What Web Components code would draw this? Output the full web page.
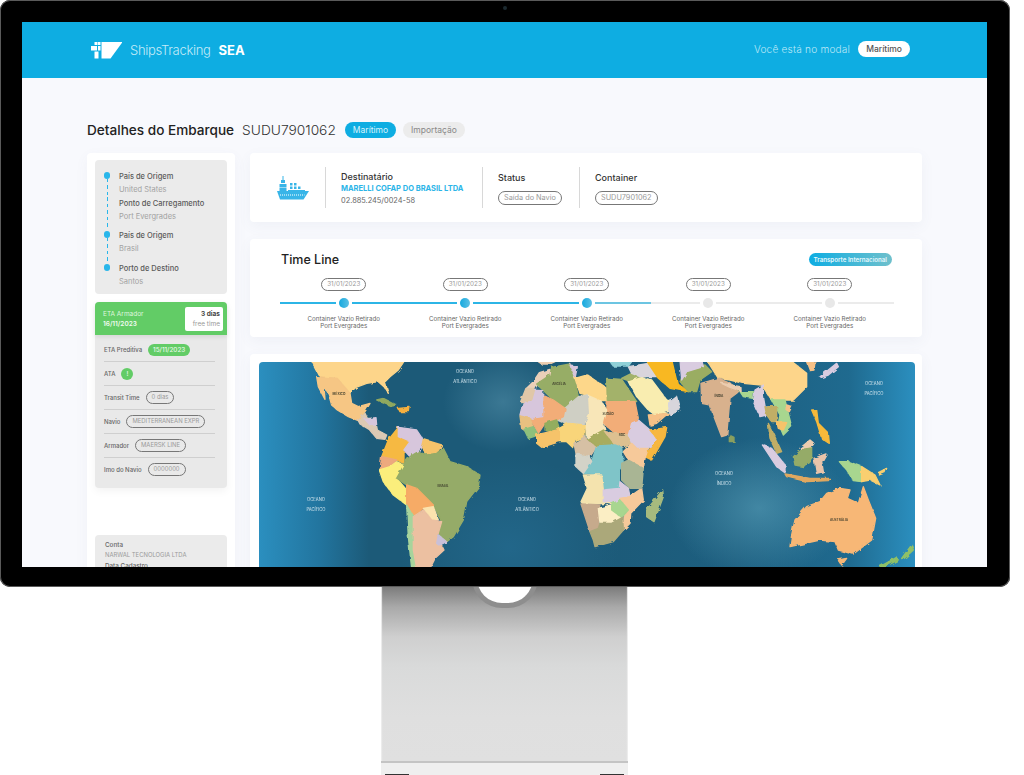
<!DOCTYPE html>
<html lang="pt-BR">
<head>
<meta charset="utf-8">
<title>ShipsTracking SEA</title>
<style>
    html, body { margin: 0; padding: 0; background: #fff; height: 775px; overflow: hidden; }
    body { font-family: Inter, "Liberation Sans", sans-serif; }
</style>
</head>
<body>
<desktop-monitor>
    <app-header></app-header>
    <shipment-page></shipment-page>
</desktop-monitor>

<script>
/*
*   Monitor frame: black bezel with the page inside, and the aluminium stand below.
*/
class DesktopMonitor extends HTMLElement {
    constructor() {
        super();
        this.attachShadow({ mode: "open" });
        this.shadowRoot.innerHTML = `
            <style>
                :host { display: block; width: 1010px; }
                .bezel {
                    background: #000;
                    border-radius: 10px;
                    box-shadow: inset 0 0 0 1px #5a5a5a;
                    padding: 22px 23px 20px 22px;
                    position: relative;
                    z-index: 1;
                }
                .camera {
                    position: absolute; top: 6px; left: 503px;
                    width: 4px; height: 4px; border-radius: 50%;
                    background: #1c2a30;
                }
                .screen {
                    height: 545px;
                    overflow: hidden;
                    background: #f8f9fd;
                    filter: blur(.35px);
                }
                .stand {
                    position: relative;
                    margin-left: 381px;
                    width: 247px;
                    height: 188px;
                    display: flex;
                    flex-direction: column;
                    justify-content: flex-end;
                    background: linear-gradient(180deg, #7c7c7c 0, #a9a9a9 20px, #cfcfcf 50px, #d9dada 80px, #dfdfdf 130px, #e0e0e0 174px);
                    box-shadow: inset 2px 0 1px -1px #eee, inset -2px 0 1px -1px #eee;
                }
                .notch {
                    position: absolute; left: 91px; top: -14px;
                    width: 56px; height: 30px;
                    border-radius: 0 0 30px 30px;
                    background: #fff;
                    border: 5px solid #8e8e8e;
                    border-top: 0;
                    box-sizing: content-box;
                }
                .base {
                    height: 12px;
                    background: #efefef;
                    border-top: 2px solid #c4c4c4;
                    display: flex;
                    justify-content: space-between;
                    align-items: flex-end;
                    padding: 0 4px;
                }
                .foot { width: 24px; height: 1px; background: #333; }
            </style>
            <div class="bezel">
                <div class="camera"></div>
                <div class="screen"><slot></slot></div>
            </div>
            <div class="stand">
                <div class="notch"></div>
                <div class="base"><span class="foot"></span><span class="foot"></span></div>
            </div>
        `;
    }
}
customElements.define("desktop-monitor", DesktopMonitor);

class AppHeader extends HTMLElement {
    constructor() {
        super();
        this.attachShadow({ mode: "open" });
        this.shadowRoot.innerHTML = `
            <style>
                :host {
                    display: flex;
                    align-items: center;
                    justify-content: space-between;
                    height: 56px;
                    padding: 0 77px 0 69px;
                    background: #0eade2;
                }
                .brand { display: flex; align-items: center; }
                .brand svg { display: block; margin-right: 8px; }
                .name { font-size: 13px; font-weight: 300; color: #c4ebf8; letter-spacing: -0.3px; }
                .sea { font-size: 13px; font-weight: 700; color: #fff; margin-left: 8px; }
                .modal { display: flex; align-items: center; gap: 8px; margin-top: -2px; }
                .modal span { font-size: 10.1px; font-weight: 300; color: #bde8f7; letter-spacing: .2px; }
                .modal b {
                    display: block;
                    background: #fff; color: #555;
                    font-size: 8.5px; font-weight: 500;
                    line-height: 16px; padding: 0 8px;
                    border-radius: 8px;
                }
            </style>
            <div class="brand">
                <svg width="31" height="18" viewBox="91 42 31 18" fill="#fff">
                    <rect x="94.5" y="43" width="3" height="3"/>
                    <rect x="98" y="43" width="2.5" height="3"/>
                    <rect x="91" y="47" width="6" height="4.5"/>
                    <rect x="98" y="47" width="2.5" height="4.5"/>
                    <rect x="94.5" y="52.5" width="4" height="7"/>
                    <path d="M101.5 43 H122.5 L110.5 59.5 H101.5 Z"/>
                </svg>
                <span class="name">ShipsTracking</span>
                <span class="sea">SEA</span>
            </div>
            <div class="modal"><span>Você está no modal</span><b>Marítimo</b></div>
        `;
    }
}
customElements.define("app-header", AppHeader);

/*
*   Small outlined pill used for values all over the page.
*/
class ValuePill extends HTMLElement {
    constructor() {
        super();
        this.attachShadow({ mode: "open" });
        this.shadowRoot.innerHTML = `
            <style>
                :host {
                    display: inline-block;
                    border: 1px solid #777;
                    border-radius: 8px;
                    padding: 0 5px;
                    font-size: 5.9px;
                    font-weight: 400;
                    line-height: 10.5px;
                    color: #999;
                    white-space: nowrap;
                }
            </style>
            <slot></slot>
        `;
    }
}
customElements.define("value-pill", ValuePill);

class RouteStop extends HTMLElement {
    constructor() {
        super();
        this.attachShadow({ mode: "open" });
        this.shadowRoot.innerHTML = `
            <style>
                :host { display: flex; }
                .rail { width: 24px; display: flex; flex-direction: column; align-items: center; flex: none; }
                .dot { width: 6.5px; height: 6.5px; border-radius: 50%; background: #29b6ea; margin-top: 2px; flex: none; }
                .dash {
                    flex: 1; width: 1px;
                    background: repeating-linear-gradient(180deg, #29b6ea 0, #29b6ea 3.5px, transparent 3.5px, transparent 6.5px);
                }
                :host([plain]) .dot { display: none; }
                :host([last]) .dash { display: none; }
                .label { font-size: 7.5px; font-weight: 500; color: #5a5a5a; line-height: 13px; }
                .value { font-size: 7.5px; color: #a2a2a2; line-height: 13px; }
            </style>
            <div class="rail"><span class="dot"></span><span class="dash"></span></div>
            <div>
                <div class="label">${this.getAttribute("label")}</div>
                <div class="value">${this.getAttribute("value")}</div>
            </div>
        `;
    }
}
customElements.define("route-stop", RouteStop);

class InfoRow extends HTMLElement {
    constructor() {
        super();
        this.attachShadow({ mode: "open" });
        this.shadowRoot.innerHTML = `
            <style>
                :host {
                    display: flex;
                    align-items: center;
                    gap: 6px;
                    height: 23px;
                    border-bottom: 1px solid #cfcfcf;
                    font-size: 6px;
                    font-weight: 500;
                    color: #666;
                }
                :host([last]) { border-bottom: 0; }
            </style>
            <span>${this.getAttribute("label")}</span>
            <slot></slot>
        `;
    }
}
customElements.define("info-row", InfoRow);

class ShipmentSidebar extends HTMLElement {
    constructor() {
        super();
        this.attachShadow({ mode: "open" });
        this.shadowRoot.innerHTML = `
            <style>
                :host {
                    display: block;
                    width: 148px;
                    height: 470px;
                    box-sizing: border-box;
                    padding: 7px 8px 0 8px;
                    background: #fff;
                    border-radius: 4px;
                    box-shadow: 0 4px 14px rgba(90,100,130,.05);
                }
                .route {
                    background: #ebebeb;
                    border-radius: 4px;
                    height: 134px;
                    box-sizing: border-box;
                    padding: 10px 0 0 0;
                }
                route-stop:nth-child(1) { height: 27px; }
                route-stop:nth-child(2) { height: 32px; }
                route-stop:nth-child(3) { height: 33px; }
                .eta { margin-top: 8px; background: #e9e9e9; border-radius: 4px; height: 186px; box-shadow: 0 3px 8px rgba(0,0,0,.05); }
                .eta-head {
                    height: 33px;
                    box-sizing: border-box;
                    background: #62cc66;
                    border-radius: 4px 4px 0 0;
                    padding: 4px 4px 4px 8px;
                    display: flex;
                    justify-content: space-between;
                    align-items: center;
                    box-shadow: 0 2px 4px rgba(0,0,0,.08);
                    font-size: 6.5px;
                    line-height: 10px;
                    color: #dff6df;
                }
                .eta-head b { display: block; font-weight: 600; color: #f2fbf2; }
                .free {
                    width: 38px; height: 24px;
                    box-sizing: border-box;
                    background: #fff;
                    border-radius: 2px;
                    padding: 2px 3px;
                    text-align: right;
                    color: #999;
                    line-height: 10px;
                }
                .free b { color: #444; font-weight: 700; }
                .rows { padding: 3px 12px 0 9px; }
                .green {
                    background: #62cc66; color: #e9f9e9;
                    border-radius: 6px;
                    font-size: 6.3px; font-weight: 500;
                    line-height: 12px; padding: 0 5px;
                }
                .ata { padding: 0; width: 12px; text-align: center; }
                .account {
                    margin-top: 47px;
                    background: #ebebeb;
                    border-radius: 4px;
                    padding: 6px 10px;
                    font-size: 5.9px;
                    line-height: 9px;
                    color: #9a9a9a;
                    height: 60px;
                }
                .account b { display: block; font-weight: 500; color: #666; margin-top: 3px; font-size: 6.3px; }
                .account b:first-child { margin-top: 0; }
            </style>
            <div class="route">
                <route-stop label="País de Origem" value="United States"></route-stop>
                <route-stop plain label="Ponto de Carregamento" value="Port Evergrades"></route-stop>
                <route-stop label="País de Origem" value="Brasil"></route-stop>
                <route-stop last label="Porto de Destino" value="Santos"></route-stop>
            </div>
            <div class="eta">
                <div class="eta-head">
                    <div>ETA Armador<b>16/11/2023</b></div>
                    <div class="free"><b>3 dias</b>free time</div>
                </div>
                <div class="rows">
                    <info-row label="ETA Preditiva"><span class="green">15/11/2023</span></info-row>
                    <info-row label="ATA"><span class="green ata">!</span></info-row>
                    <info-row label="Transit Time"><value-pill>0 dias</value-pill></info-row>
                    <info-row label="Navio"><value-pill>MEDITERRANEAN EXPR</value-pill></info-row>
                    <info-row label="Armador"><value-pill>MAERSK LINE</value-pill></info-row>
                    <info-row last label="Imo do Navio"><value-pill>0000000</value-pill></info-row>
                </div>
            </div>
            <div class="account">
                <b>Conta</b>NARWAL TECNOLOGIA LTDA
                <b>Data Cadastro</b>
            </div>
        `;
    }
}
customElements.define("shipment-sidebar", ShipmentSidebar);

class SummaryCard extends HTMLElement {
    constructor() {
        super();
        this.attachShadow({ mode: "open" });
        this.shadowRoot.innerHTML = `
            <style>
                :host {
                    display: flex;
                    align-items: center;
                    height: 69px;
                    background: #fff;
                    border-radius: 4px;
                    box-shadow: 0 4px 14px rgba(90,100,130,.06);
                }
                .ship { width: 75px; display: flex; justify-content: center; padding-left: 10px; box-sizing: border-box; }
                .col {
                    height: 41px;
                    box-sizing: border-box;
                    border-left: 1px solid #d8d8d8;
                    padding-left: 15px;
                }
                .dest { width: 157px; padding-top: 3px; }
                .status { width: 97px; padding-top: 4px; }
                .title { font-size: 9px; font-weight: 500; color: #333; line-height: 13px; }
                .company { font-size: 7.5px; font-weight: 700; color: #2bb5e8; line-height: 11px; white-space: nowrap; }
                .doc { font-size: 7.4px; color: #666; line-height: 13px; }
                value-pill { font-size: 7.3px; line-height: 12px; margin-top: 1px; padding: 0 5px; }
            </style>
            <div class="ship">
                <svg width="32" height="24" viewBox="0 0 32 24" fill="#38b5e8">
                    <rect x="5.5" y="0" width="1" height="6"/>
                    <rect x="4" y="4" width="4" height="3"/>
                    <rect x="2.5" y="8" width="7" height="3"/>
                    <rect x="2.5" y="11.500" width="7" height="3.500"/>
                    <rect x="13" y="7" width="2.500" height="2.500"/><rect x="17" y="7" width="2.500" height="2.500"/>
                    <rect x="13" y="10.500" width="2.500" height="2.500"/><rect x="17" y="10.500" width="2.500" height="2.500"/><rect x="21" y="10.500" width="2.500" height="2.500"/>
                    <rect x="11" y="14" width="17" height="1.500"/>
                    <path d="M0 15 H32 L26.500 23.500 H3 Z"/>
                    <path d="M3 19 H27.500" stroke="#bfe9f8" stroke-width="1.500" stroke-dasharray="1 1"/>
                </svg>
            </div>
            <div class="col dest">
                <div class="title">Destinatário</div>
                <div class="company">MARELLI COFAP DO BRASIL LTDA</div>
                <div class="doc">02.885.245/0024-58</div>
            </div>
            <div class="col status">
                <div class="title">Status</div>
                <value-pill>Saída do Navio</value-pill>
            </div>
            <div class="col status">
                <div class="title">Container</div>
                <value-pill>SUDU7901062</value-pill>
            </div>
        `;
    }
}
customElements.define("summary-card", SummaryCard);

/*
*   One stop of the time line: date on top, dot on the rail, text below.
*   state: done | going | next | (empty)
*/
class TimelineStep extends HTMLElement {
    constructor() {
        super();
        const state = this.getAttribute("state") || "";
        this.attachShadow({ mode: "open" });
        this.shadowRoot.innerHTML = `
            <style>
                :host { display: flex; flex-direction: column; align-items: center; }
                .rail { width: 100%; display: flex; align-items: center; gap: 3px; margin: 7px 0; height: 10px; }
                .line { flex: 1; height: 2px; background: #ebebeb; }
                .dot { width: 10px; height: 10px; border-radius: 50%; background: #e8e8e8; flex: none; }
                .done .line, .going .line:first-child { background: #2cb5e6; }
                .going .line:last-child { background: #6cc5e2; }
                .next .line:first-child { background: linear-gradient(90deg, #6cc5e2 3px, #ebebeb 3px); }
                .done .dot, .going .dot { background: linear-gradient(90deg, #15a9df, #5cc0e4); }
                :host(:first-child) .line:first-child { box-shadow: -3px 0 0 #2cb5e6; }
                :host(:last-child) .line:last-child { box-shadow: 3px 0 0 #ebebeb; }
                .text { font-size: 6.2px; line-height: 7px; color: #666; text-align: center; white-space: nowrap; }
                value-pill { font-size: 6.3px; }
            </style>
            <value-pill>${this.getAttribute("date")}</value-pill>
            <div class="rail ${state}"><span class="line"></span><span class="dot"></span><span class="line"></span></div>
            <div class="text">Container Vazio Retirado<br>Port Evergrades</div>
        `;
    }
}
customElements.define("timeline-step", TimelineStep);

class TimelineCard extends HTMLElement {
    constructor() {
        super();
        this.attachShadow({ mode: "open" });
        this.shadowRoot.innerHTML = `
            <style>
                :host {
                    display: block;
                    height: 98px;
                    box-sizing: border-box;
                    padding: 14px 30px 0 33px;
                    background: #fff;
                    border-radius: 4px;
                    box-shadow: 0 4px 14px rgba(90,100,130,.06);
                }
                .head { display: flex; justify-content: space-between; align-items: center; height: 13px; }
                h2 { margin: 0 0 0 -2px; font-size: 12.5px; font-weight: 500; color: #222; }
                .badge {
                    background: linear-gradient(90deg, #0eade2, #6fc0cc);
                    color: #e6f8fd;
                    font-size: 6.2px; font-weight: 600;
                    line-height: 13px;
                    padding: 0 5px;
                    border-radius: 7px;
                    white-space: nowrap;
                }
                .steps { display: grid; grid-template-columns: repeat(5, 121.5px); margin-top: 12px; }
            </style>
            <div class="head"><h2>Time Line</h2><span class="badge">Transporte Internacional</span></div>
            <div class="steps">
                <timeline-step state="done" date="31/01/2023"></timeline-step>
                <timeline-step state="done" date="31/01/2023"></timeline-step>
                <timeline-step state="going" date="31/01/2023"></timeline-step>
                <timeline-step state="next" date="31/01/2023"></timeline-step>
                <timeline-step date="31/01/2023"></timeline-step>
            </div>
        `;
    }
}
customElements.define("timeline-card", TimelineCard);

/*
*   World map, hand traced. Coordinates are in 3x units of three regions of the map.
*/
const AMERICAS = [
    ["#fdd58a", "M183,30 L465,30 L445,60 L420,80 L405,95 L415,130 L402,110 L385,95 L350,100 L318,112 L300,128 L262,85 L210,80 Z"],
    ["#f6c684", "M200,80 L262,85 L300,130 L305,160 L325,170 L360,160 L345,185 L325,212 L295,200 L262,180 L245,165 L235,130 L222,110 L225,148 L205,110 Z"],
    ["#dcc9b4", "M325,212 L345,190 L352,205 L375,205 L382,240 L410,255 L405,268 L380,265 L360,240 L330,222 Z"],
    ["#d7c6dc", "M345,208 L378,203 L380,225 L360,225 Z"],
    ["#8fa85f", "M380,150 L400,145 L440,165 L425,168 L395,157 Z"],
    ["#f5b03f", "M445,175 L480,172 L478,185 L450,185 Z"],
    ["#f6b943", "M415,270 L445,232 L445,260 L480,275 L462,300 L462,340 L440,330 L395,320 Z"],
    ["#d7c6dc", "M445,232 L500,240 L520,270 L505,305 L480,320 L462,300 L480,275 L445,260 Z"],
    ["#f6c36b", "M520,268 L575,285 L560,310 L530,315 L515,290 Z"],
    ["#eda97e", "M395,320 L440,330 L420,350 L390,360 Z"],
    ["#fbee7c", "M388,360 L420,350 L440,335 L462,345 L440,385 L470,420 L470,465 L430,435 L400,395 Z"],
    ["#95ab67", "M480,320 L505,305 L530,315 L560,310 L580,295 L600,335 L650,350 L690,375 L685,410 L650,455 L640,510 L610,560 L590,575 L565,550 L575,515 L550,465 L500,415 L470,405 L440,385 L462,345 L462,340 Z"],
    ["#f6ab66", "M470,405 L500,415 L550,465 L550,490 L520,475 L490,500 L470,465 Z"],
    ["#fbe3ae", "M520,475 L550,470 L565,510 L545,510 Z"],
    ["#a7d49c", "M470,465 L490,500 L490,600 L500,655 L485,655 L475,560 Z"],
    ["#ecc0a1", "M490,500 L520,480 L545,510 L575,515 L562,560 L582,600 L555,625 L540,655 L500,655 L490,600 Z"],
    ["#c9c0d8", "M565,555 L590,575 L570,585 L560,580 Z"]
];

const AFRICA = [
    ["#eacfb8", "M118,38 L150,28 L155,45 L115,70 L105,85 L80,85 L100,65 Z"],
    ["#97ad66", "M110,72 L150,45 L155,22 L210,12 L225,60 L235,110 L195,145 L160,120 Z"],
    ["#d7c6dc", "M210,15 L232,20 L225,55 Z"],
    ["#fdd78a", "M225,55 L262,45 L320,85 L322,125 L305,125 L262,105 L240,100 Z"],
    ["#a3b26a", "M320,55 L365,58 L410,125 L322,122 Z"],
    ["#f2ad78", "M322,125 L405,125 L415,175 L395,195 L385,225 L345,220 L310,190 L320,150 Z"],
    ["#f8e6b8", "M262,105 L305,125 L320,150 L310,190 L315,210 L262,235 L255,190 L265,165 Z"],
    ["#cfcfc4", "M195,145 L235,110 L262,105 L265,165 L250,190 L195,190 L170,180 Z"],
    ["#f2ad78", "M128,105 L160,120 L195,145 L190,170 L170,180 L135,190 L115,220 L90,175 L128,170 Z"],
    ["#d7c6dc", "M85,90 L128,92 L128,170 L90,175 L60,165 L70,125 L95,125 Z"],
    ["#e0c7a8", "M62,125 L78,85 L105,85 L95,120 Z"],
    ["#e8c080", "M60,168 L90,175 L100,205 L80,215 L65,205 Z"],
    ["#8fc07c", "M72,208 L100,200 L115,225 L85,235 Z"],
    ["#93ad5e", "M135,190 L170,180 L178,205 L150,215 L135,210 Z"],
    ["#f9d57a", "M178,205 L205,190 L255,195 L255,230 L225,240 L218,262 L200,245 L180,245 Z"],
    ["#f6c36b", "M110,225 L150,215 L178,208 L178,245 L125,262 L110,250 Z"],
    ["#d6c0a4", "M222,250 L255,230 L262,240 L290,260 L270,290 L228,280 Z"],
    ["#a8ac5f", "M262,237 L310,210 L345,235 L345,255 L290,258 Z"],
    ["#ddc090", "M315,215 L345,220 L385,225 L395,250 L365,262 L345,255 Z"],
    ["#d9cce0", "M385,225 L395,190 L415,180 L450,210 L475,235 L445,265 L410,265 L395,250 Z"],
    ["#f7b73f", "M450,210 L500,203 L495,230 L455,300 L435,290 L470,235 Z"],
    ["#f6c99a", "M395,250 L410,265 L445,265 L435,295 L430,325 L385,300 L370,275 Z"],
    ["#7fc4c8", "M290,258 L345,255 L365,262 L370,310 L358,330 L358,385 L310,385 L305,345 L250,340 L275,305 Z"],
    ["#d3d3c8", "M228,282 L270,290 L275,305 L250,340 L228,320 Z"],
    ["#f4e3ae", "M250,345 L305,345 L310,390 L345,430 L250,432 L243,425 L262,385 Z"],
    ["#a9b594", "M365,310 L385,300 L430,325 L425,385 L390,385 L365,360 Z"],
    ["#d9cce0", "M310,390 L358,385 L360,365 L385,385 L390,410 L360,430 L310,425 Z"],
    ["#f6c99a", "M390,410 L425,385 L430,420 L392,460 L390,490 L370,510 L372,470 L385,450 L360,415 Z"],
    ["#c6aa8c", "M243,432 L300,435 L295,450 L295,515 L270,515 Z"],
    ["#fbeec4", "M295,445 L335,435 L365,472 L335,490 L300,490 Z"],
    ["#a8d68f", "M335,432 L360,420 L385,450 L365,472 L335,450 Z"],
    ["#aba87a", "M270,515 L295,505 L300,490 L335,490 L368,472 L370,510 L340,545 L285,560 L280,540 Z"],
    ["#a6ba7e", "M488,390 L490,410 L462,485 L440,470 L440,450 Z"],
    ["#f9edb0", "M385,62 L415,50 L455,60 L500,120 L530,130 L520,150 L465,165 L445,150 L410,110 Z"],
    ["#f6c187", "M445,165 L505,160 L470,190 L450,195 Z"],
    ["#d8d6dc", "M505,130 L530,110 L540,150 L510,165 Z"],
    ["#a3b26a", "M365,55 L395,40 L420,50 L385,62 Z"],
    ["#d9d5dc", "M385,20 L445,10 L470,50 L420,50 L395,40 Z"],
    ["#eccdb0", "M115,5 L165,5 L150,12 L125,12 Z"],
    ["#8fd0d8", "M330,5 L395,5 L385,18 L340,18 Z"]
];

const ASIA = [
    ["#f8b820", "M168,30 L245,30 L262,100 L295,125 L240,115 L205,85 Z"],
    ["#fdd58a", "M350,30 L600,30 L650,70 L650,110 L610,150 L590,150 L545,150 L515,105 L460,100 L420,90 L385,85 Z"],
    ["#9aad62", "M285,60 L345,45 L365,65 L330,90 L320,125 L295,125 L270,95 Z"],
    ["#d9cce0", "M270,30 L335,30 L340,50 L290,65 L275,90 Z"],
    ["#d8b18d", "M333,100 L385,85 L420,100 L450,120 L440,130 L420,145 L410,255 L395,260 L370,195 L360,165 L335,160 Z"],
    ["#8a9f5e", "M418,255 L432,262 L432,275 L418,275 Z"],
    ["#d9cce0", "M495,120 L520,105 L520,140 L530,195 L510,200 L490,155 Z"],
    ["#a8d68f", "M450,125 L490,125 L488,145 L460,140 Z"],
    ["#eccdb0", "M395,100 L450,110 L450,122 L420,112 Z"],
    ["#a8d68f", "M545,150 L585,150 L605,230 L580,255 L565,220 L570,195 Z"],
    ["#c1ae66", "M525,170 L560,170 L560,215 L545,215 L530,195 Z"],
    ["#f6c36b", "M560,215 L590,218 L580,240 L565,235 Z"],
    ["#c1ae66", "M535,220 L550,250 L575,305 L560,310 L540,265 Z"],
    ["#d9cce0", "M517,285 L545,295 L585,345 L585,368 L560,350 Z"],
    ["#e0a860", "M585,372 L660,385 L720,385 L715,392 L650,395 L590,380 Z"],
    ["#95ab67", "M610,320 L640,295 L665,290 L665,325 L640,350 L615,345 Z"],
    ["#eccdb0", "M630,295 L660,270 L672,280 L665,290 Z"],
    ["#e9c4aa", "M672,325 L708,312 L695,335 L700,365 L680,370 Z"],
    ["#f6b93a", "M665,180 L680,180 L685,220 L715,250 L718,280 L695,265 L680,215 Z"],
    ["#d9cce0", "M690,80 L740,40 L745,50 L715,75 L695,82 Z"],
    ["#f6c187", "M650,36 L675,36 L672,60 L660,62 Z"],
    ["#f6c187", "M590,165 L605,170 L598,185 L588,178 Z"],
    ["#a8d68f", "M748,335 L775,335 L815,350 L815,395 L790,392 L770,360 Z"],
    ["#f9cf6f", "M815,350 L855,375 L870,405 L840,390 L815,395 Z"],
    ["#f9cf6f", "M865,368 L890,355 L885,368 L868,375 Z"],
    ["#f7b776", "M710,430 L750,415 L780,420 L772,445 L805,460 L820,410 L835,450 L857,505 L845,570 L790,612 L745,600 L735,575 L690,570 L600,590 L605,555 L615,510 L650,470 L690,455 Z"],
    ["#f7b776", "M745,630 L770,625 L755,645 Z"],
    ["#8fc067", "M935,625 L965,585 L970,600 L940,628 Z"],
    ["#8fc067", "M870,650 L920,622 L925,630 L885,650 Z"]
];

const OCEAN_LABELS = [
    [465, 372.5, "OCEANO"], [465, 383, "ATLÂNTICO"],
    [316, 500.5, "OCEANO"], [316, 511, "PACÍFICO"],
    [527, 500.5, "OCEANO"], [527, 511, "ATLÂNTICO"],
    [874, 384.5, "OCEANO"], [874, 395, "PACÍFICO"],
    [724, 474.5, "OCEANO"], [724, 485, "ÍNDICO"]
];

const COUNTRY_LABELS = [
    [443, 487, "BRASIL"], [839, 521, "AUSTRÁLIA"], [719, 397, "ÍNDIA"],
    [559, 385, "ARGÉLIA"], [339, 395, "MÉXICO"], [608, 415, "SUDÃO"], [622, 436, "RDC"]
];

function mapShapes(list) {
    return list.map(([fill, d]) => `<path fill="${fill}" stroke="${fill}" stroke-width="4" stroke-linejoin="round" d="${d}"/>`).join("");
}

class WorldMap extends HTMLElement {
    constructor() {
        super();
        this.attachShadow({ mode: "open" });
        const oceans = OCEAN_LABELS.map(([x, y, t]) => `<text x="${x}" y="${y}" class="ocean">${t}</text>`).join("");
        const countries = COUNTRY_LABELS.map(([x, y, t]) => `<text x="${x}" y="${y}" class="country">${t}</text>`).join("");
        this.shadowRoot.innerHTML = `
            <style>
                :host {
                    display: block;
                    height: 260px;
                    border-radius: 4px;
                    overflow: hidden;
                    background:
                        radial-gradient(ellipse 60px 50px at 244px 40px, rgba(90,150,175,.5), transparent),
                        radial-gradient(ellipse 90px 70px at 500px 146px, rgba(90,160,185,.6), transparent),
                        radial-gradient(ellipse 110px 90px at 250px 185px, rgba(40,115,155,.5), transparent),
                        linear-gradient(90deg, #2b8fbf 0, #22759f 60px, #1c5a78 110px, #1c5a78 330px, #1d5f80 480px, #1f6a8f 590px, #2b8fbf 656px);
                }
                svg { display: block; }
                .ocean { font: 4.2px Inter, "Liberation Sans", sans-serif; fill: #cfe3ec; text-anchor: middle; }
                .country { font: 600 3.2px Inter, "Liberation Sans", sans-serif; fill: #3a3a2a; text-anchor: middle; }
            </style>
            <svg width="656" height="260" viewBox="259 362 656 260">
                <defs>
                    <filter id="coast" x="-2%" y="-2%" width="104%" height="104%">
                        <feTurbulence type="fractalNoise" baseFrequency=".16" numOctaves="2" seed="4" result="noise"/>
                        <feDisplacementMap in="SourceGraphic" in2="noise" scale="3.500"/>
                    </filter>
                </defs>
                <g filter="url(#coast)">
                    <g transform="translate(250 350) scale(.33333)">${mapShapes(AMERICAS)}</g>
                    <g transform="translate(500 360) scale(.33333)">${mapShapes(AFRICA)}</g>
                    <g transform="translate(590 350) scale(.33333)">${mapShapes(ASIA)}</g>
                </g>
                ${oceans}${countries}
            </svg>
        `;
    }
}
customElements.define("world-map", WorldMap);

class ShipmentPage extends HTMLElement {
    constructor() {
        super();
        this.attachShadow({ mode: "open" });
        this.shadowRoot.innerHTML = `
            <style>
                :host {
                    display: block;
                    padding: 44px 65px 0 65px;
                    background: #f8f9fd;
                }
                .title { display: flex; align-items: center; height: 16px; margin-bottom: 15px; white-space: nowrap; }
                h1 { margin: 0 8px 0 0; font-size: 13.6px; font-weight: 500; color: #222; }
                .code { font-size: 13.75px; font-weight: 300; color: #333; margin-right: 9px; }
                .tag { font-size: 8.5px; line-height: 16px; padding: 0 8px; border-radius: 8px; margin-right: 7px; }
                .tag.blue { background: #0eade2; color: #d9f3fc; }
                .tag.grey { background: #ececec; color: #888; }
                .columns { display: grid; grid-template-columns: 148px 672px; column-gap: 15px; align-items: start; }
                .main { display: flex; flex-direction: column; gap: 17px; }
                .map-card {
                    background: #fff;
                    border-radius: 4px;
                    padding: 8px 7px 8px 9px;
                    box-shadow: 0 4px 14px rgba(90,100,130,.06);
                }
            </style>
            <div class="title">
                <h1>Detalhes do Embarque</h1>
                <span class="code">SUDU7901062</span>
                <span class="tag blue">Marítimo</span>
                <span class="tag grey">Importação</span>
            </div>
            <div class="columns">
                <shipment-sidebar></shipment-sidebar>
                <div class="main">
                    <summary-card></summary-card>
                    <timeline-card></timeline-card>
                    <div class="map-card"><world-map></world-map></div>
                </div>
            </div>
        `;
    }
}
customElements.define("shipment-page", ShipmentPage);
</script>
</body>
</html>
